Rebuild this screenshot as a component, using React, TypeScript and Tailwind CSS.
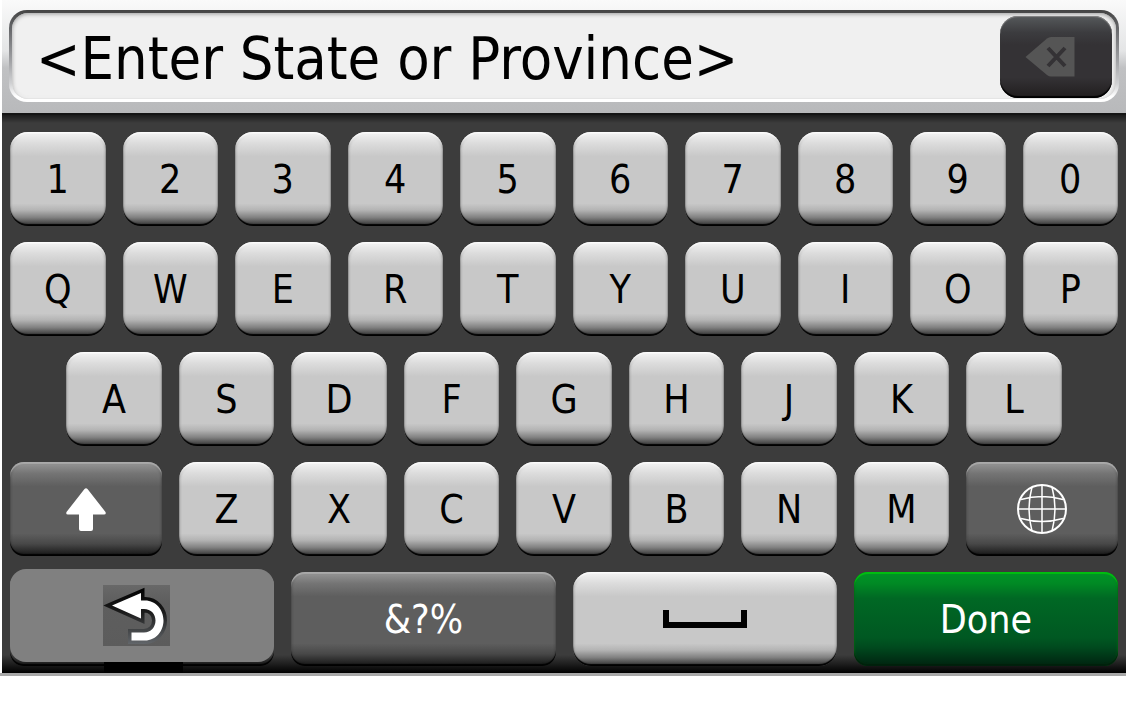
import React, { useState } from 'react';
import clsx from 'clsx';

type KeyVariant = 'light' | 'dark' | 'green';

interface KeyProps {
  variant?: KeyVariant;
  className?: string;
  label?: string;
  onClick?: () => void;
  children: React.ReactNode;
}

const variants: Record<KeyVariant, string> = {
  light:
    'text-black rounded-[18px] bg-[linear-gradient(#f4f4f4_0%,#dcdcdc_12%,#c8c8c8_26%,#c8c8c8_76%,#b4b4b4_83%,#808080_91%,#484848_97%)] shadow-[inset_0_-2px_1px_#000,inset_0_3px_2px_-1px_#fff,inset_0_0_3px_#666]',
  dark:
    'text-white rounded-[14px] bg-[linear-gradient(#999_0%,#757575_12%,#5e5e5e_26%,#5e5e5e_76%,#484848_87%,#1c1c1c_98%)] shadow-[inset_0_-2px_1px_#000,inset_0_2px_1px_#aaa,inset_0_0_3px_#333]',
  green:
    'text-white rounded-[14px] bg-[linear-gradient(#009428_0%,#008a24_12%,#006824_28%,#005822_70%,#004a1e_80%,#002812_97%)] shadow-[inset_0_-2px_1px_#00200c,inset_0_2px_1px_#00c010,inset_0_0_3px_#007010]',
};

const Key: React.FC<KeyProps> = ({ variant = 'light', className = 'col-span-2', label, onClick, children }) => (
  <button
    type="button"
    aria-label={label}
    onClick={onClick}
    className={clsx('flex h-[94px] items-center justify-center text-[39px] leading-none', variants[variant], className)}
  >
    {children}
  </button>
);

const BackspaceIcon = () => (
  <svg width="50" height="40" viewBox="0 0 50 40" aria-hidden="true">
    <path d="M0.5 20 L22 1.5 Q24 0 26 0 H49.500 V39.500 H26 Q24 39.500 22 38 Z" fill="#555" />
    <path d="M23 11 L40 29 M40 11 L23 29" stroke="#343235" strokeWidth="4" />
  </svg>
);

const ShiftIcon = () => (
  <svg width="40" height="43" viewBox="0 0 40 43" fill="#fff" aria-hidden="true">
    <path d="M18.500 1 Q20 -0.500 21.500 1 L39.500 24 Q40.500 26.500 38 26.500 H27 V41 Q27 43 25 43 H15 Q13 43 13 41 V26.500 H2 Q-0.500 26.500 0.500 24 Z" />
  </svg>
);

const GlobeIcon = () => (
  <svg width="50" height="50" viewBox="0 0 50 50" fill="none" stroke="#fff" aria-hidden="true">
    <circle cx="25" cy="25" r="24" strokeWidth="2" />
    <path
      d="M25 1 V49 M1 25 H49 M15 3 Q9 25 15 47 M35 3 Q41 25 35 47 M4 15.500 Q25 9.500 46 15.500 M4 34.500 Q25 40.500 46 34.500"
      strokeWidth="1.500"
    />
  </svg>
);

const BackIcon = () => (
  <svg width="67" height="61" viewBox="0 0 67 61" aria-hidden="true">
    <defs>
      <linearGradient id="plate" x1="0" y1="0" x2="0" y2="1">
        <stop offset="0" stopColor="#686868" />
        <stop offset="0.3" stopColor="#5e5e5e" />
        <stop offset="1" stopColor="#5c5c5c" />
      </linearGradient>
      <linearGradient id="rim" gradientUnits="userSpaceOnUse" x1="0" y1="2" x2="0" y2="59">
        <stop offset="0" stopColor="#000" />
        <stop offset="0.45" stopColor="#1c1c1c" />
        <stop offset="1" stopColor="#62666a" />
      </linearGradient>
    </defs>
    <rect width="67" height="61" fill="url(#plate)" />
    <path
      d="M9 20.500 L38 8 V15.500 H42 C53 15.500 60.500 25 60.500 35.500 C60.500 46 53 55.500 42 55.500 H28.500 V47.500 H41 C48 47.500 52.500 42 52.500 35.500 C52.500 29 48 24 41 24 H38 V33.500 Z"
      fill="#fff"
      stroke="url(#rim)"
      strokeWidth="7"
      paintOrder="stroke"
    />
  </svg>
);

const SpaceIcon = () => (
  <svg width="84" height="18" viewBox="0 0 84 18" fill="none" stroke="#000" strokeWidth="6" aria-hidden="true">
    <path d="M3 0 V15 H81 V0" />
  </svg>
);

const letters = (row: string) => row.split('');

export default function App() {
  const [text, setText] = useState('');

  const type = (char: string) => setText(text + char);

  return (
    <div className="min-h-screen bg-white font-['DejaVu_Sans_Condensed','DejaVu_Sans',sans-serif]">
      <div className="border-b-[3px] border-[#a8a8a8]">
        <div className="ml-0.5">
          <header className="border-b-2 border-[#151515] bg-[linear-gradient(#fafafa_0%,#e4e5e6_45%,#c0c1c3_60%,#b8b9bb_100%)] px-[7px] pt-2.5 pb-[11px]">
            {/* bevelled frame round the text box */}
            <div className="rounded-[18px] bg-[linear-gradient(#444_0%,#66676a_20%,#a0a1a4_55%,#d0d1d3_80%,#fff_94%)] p-[3px]">
              <div className="flex h-[86px] items-center rounded-2xl bg-[#f0f0f0] pt-0.5 pr-1 shadow-[inset_0_1px_4px_#999,inset_0_-2px_2px_#fff]">
                <input
                  type="text"
                  aria-label="State or Province"
                  placeholder="<Enter State or Province>"
                  value={text}
                  onChange={e => setText(e.target.value)}
                  className="h-full min-w-0 flex-1 bg-transparent pt-0.5 pl-6 text-[59px] text-black outline-none placeholder:text-black placeholder:opacity-100"
                />
                <button
                  type="button"
                  aria-label="Backspace"
                  onClick={() => setText(text.slice(0, -1))}
                  className="flex h-[82px] w-28 items-center justify-center rounded-[18px] bg-[linear-gradient(#56595b_0%,#3c3c3f_20%,#343235_35%,#343235_75%,#242122_95%)] pr-3 shadow-[inset_0_-2px_1px_#000,inset_0_1px_1px_#888]"
                >
                  <BackspaceIcon />
                </button>
              </div>
            </div>
          </header>

          <main className="grid grid-cols-20 gap-x-[17px] gap-y-4 bg-[linear-gradient(#1c1c1c_0px,#3c3c3c_8px,#3c3c3c_calc(100%-18px),#000_100%)] px-2 pt-[17px] pb-[7px]">
            {letters('1234567890').map(c => (
              <Key key={c} onClick={() => type(c)}>{c}</Key>
            ))}
            {letters('QWERTYUIOP').map(c => (
              <Key key={c} onClick={() => type(c)}>{c}</Key>
            ))}
            {letters('ASDFGHJKL').map((c, i) => (
              <Key key={c} className={i === 0 ? 'col-span-2 col-start-2' : 'col-span-2'} onClick={() => type(c)}>
                {c}
              </Key>
            ))}

            <Key variant="dark" className="col-span-3" label="Shift">
              <ShiftIcon />
            </Key>
            {letters('ZXCVBNM').map(c => (
              <Key key={c} onClick={() => type(c)}>{c}</Key>
            ))}
            <Key variant="dark" className="col-span-3" label="Keyboard language">
              <GlobeIcon />
            </Key>

            <Key variant="dark" className="relative col-span-5" label="Back">
              <span className="absolute top-[90px] left-[94px] h-[11px] w-[79px] bg-black" />
              <span className="absolute inset-x-0 -top-[3px] bottom-1 flex items-center justify-center rounded-[16px] bg-[#808080] pr-3">
                <BackIcon />
              </span>
            </Key>
            <Key variant="dark" className="col-span-5">&amp;?%</Key>
            <Key className="col-span-5" label="Space" onClick={() => type(' ')}>
              <SpaceIcon />
            </Key>
            <Key variant="green" className="col-span-5">Done</Key>
          </main>
        </div>
      </div>
    </div>
  );
}
